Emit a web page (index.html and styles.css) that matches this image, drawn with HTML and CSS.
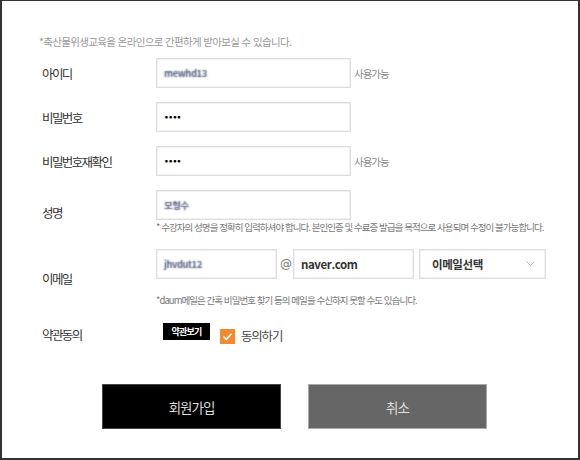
FILE: index.html
```html
<!DOCTYPE html>
<html lang="ko">
<head>
<meta charset="utf-8">
<title>회원가입</title>
<link rel="stylesheet" href="styles.css">
</head>
<body>
<div class="frame">
  <p class="notice">*축산물위생교육을 온라인으로 간편하게 받아보실 수 있습니다.</p>

  <div class="row">
    <div class="label">아이디</div>
    <div class="control">
      <div class="line">
        <div class="field"><span class="blur">mewhd13</span></div>
        <span class="status">사용가능</span>
      </div>
    </div>
  </div>

  <div class="row">
    <div class="label">비밀번호</div>
    <div class="control">
      <div class="line">
        <div class="field"><span class="dots">••••</span></div>
      </div>
    </div>
  </div>

  <div class="row">
    <div class="label">비밀번호재확인</div>
    <div class="control">
      <div class="line">
        <div class="field"><span class="dots">••••</span></div>
        <span class="status">사용가능</span>
      </div>
    </div>
  </div>

  <div class="row row-name">
    <div class="label">성명</div>
    <div class="control">
      <div class="line">
        <div class="field"><span class="blur">모형수</span></div>
      </div>
      <p class="note note-name">* 수강자의 성명을 정확히 입력하셔야 합니다. 본인인증 및 수료증 발급을 목적으로 사용되며 수정이 불가능합니다.</p>
    </div>
  </div>

  <div class="row row-email">
    <div class="label">이메일</div>
    <div class="control">
      <div class="line">
        <div class="field field-sm"><span class="blur">jhvdut12</span></div>
        <span class="at">@</span>
        <div class="field field-sm"><span class="domain">naver.com</span></div>
        <div class="field field-select">
          <span class="domain">이메일선택</span>
          <svg class="chev" width="9" height="6" viewBox="0 0 9 6"><polyline points="0.5,0.5 4.5,4.5 8.5,0.5" fill="none" stroke="#bbb" stroke-width="1"/></svg>
        </div>
      </div>
      <p class="note note-daum">*daum메일은 간혹 비밀번호 찾기 등의 메일을 수신하지 못할 수도 있습니다.</p>
    </div>
  </div>

  <div class="row row-terms">
    <div class="label">약관동의</div>
    <div class="control">
      <div class="terms">
        <span class="terms-btn">약관보기</span>
        <span class="check">
          <svg width="15" height="15" viewBox="0 0 15 15"><rect width="15" height="15" fill="#f28a30"/><polyline points="3.5,7.5 6.3,10.3 11.5,4.8" fill="none" stroke="#fff" stroke-width="1.6"/></svg>
        </span>
        <span class="agree">동의하기</span>
      </div>
    </div>
  </div>

  <div class="actions">
    <button class="btn btn-join">회원가입</button>
    <button class="btn btn-cancel">취소</button>
  </div>
</div>
</body>
</html>
```

FILE: styles.css
```css
* { box-sizing: border-box; }
html, body { margin: 0; padding: 0; background: #fff; }
body {
  font-family: "Noto Sans CJK KR", "Noto Sans", sans-serif;
  color: #333;
}
.frame {
  width: 580px;
  height: 460px;
  border: 2px solid #333;
  border-top-width: 1px;
  padding: 34px 0 0 37px;
}
.notice {
  margin: 0;
  font-size: 10.5px;
  line-height: 14px;
  letter-spacing: -0.65px;
  color: #999;
}
.row {
  display: grid;
  grid-template-columns: 117px 1fr;
  align-items: center;
  margin-top: 14px;
}
.notice + .row { margin-top: 9px; }
.label {
  padding-left: 3px;
  font-size: 12.5px;
  letter-spacing: -1.6px;
  color: #333;
}
.line {
  display: flex;
  align-items: center;
}
.field {
  width: 195px;
  height: 30px;
  border: 1px solid #dedede;
  box-shadow: inset 0 0 0 1px #f1f1f1;
  display: flex;
  align-items: center;
  padding-left: 7px;
  font-size: 12px;
}
.blur {
  display: inline-block;
  color: transparent;
  text-shadow: 0 0 1.6px rgba(70, 80, 115, 0.9);
  font-size: 9.5px;
  font-weight: bold;
  letter-spacing: -0.5px;
}
.dots {
  font-size: 7.5px;
  font-weight: bold;
  letter-spacing: -0.6px;
  color: #000;
  font-family: "DejaVu Sans", sans-serif;
}
.status {
  margin-left: 3px;
  font-size: 10.5px;
  letter-spacing: -1px;
  color: #888;
}
.note {
  margin: 0;
  font-size: 9.5px;
  line-height: 14px;
  letter-spacing: -0.95px;
  color: #777;
  white-space: nowrap;
}
.row-email { margin-top: 15px; }
.note-daum { margin-top: 14px; }
.field-sm { width: 121px; }
.at {
  width: 16px;
  padding-left: 2px;
  text-align: center;
  font-size: 12px;
  color: #777;
  font-family: "DejaVu Sans", sans-serif;
}
.field-select {
  width: 127px;
  margin-left: 5px;
  justify-content: space-between;
  padding: 0 10px 0 12px;
}
.domain {
  font-weight: bold;
  font-size: 11.5px;
  letter-spacing: -0.4px;
  color: #333;
}
.chev { display: block; }
.row-terms { margin-top: 16px; height: 22px; }
.terms {
  display: flex;
  align-items: center;
  padding-left: 7px;
}
.terms-btn {
  display: inline-block;
  width: 47px;
  height: 17px;
  margin-top: -5px;
  background: #000;
  color: #fff;
  font-size: 9px;
  font-weight: bold;
  letter-spacing: -0.8px;
  line-height: 17px;
  text-align: center;
}
.check {
  display: inline-flex;
  margin-left: 10px;
  margin-top: 5px;
}
.agree {
  margin-left: 6px;
  margin-top: 2px;
  font-size: 12.5px;
  letter-spacing: -1.2px;
  color: #444;
}
.actions {
  display: flex;
  gap: 27px;
  margin-top: 39px;
  padding-left: 63px;
}
.btn {
  width: 179px;
  height: 45px;
  font-family: "Noto Sans CJK KR", sans-serif;
  font-size: 13.5px;
  letter-spacing: -1px;
  color: #ddd;
  cursor: pointer;
}
.btn-join { background: #000; border: 1px solid #444; }
.btn-cancel { background: #666; border: 1px solid #aaa; }
```
